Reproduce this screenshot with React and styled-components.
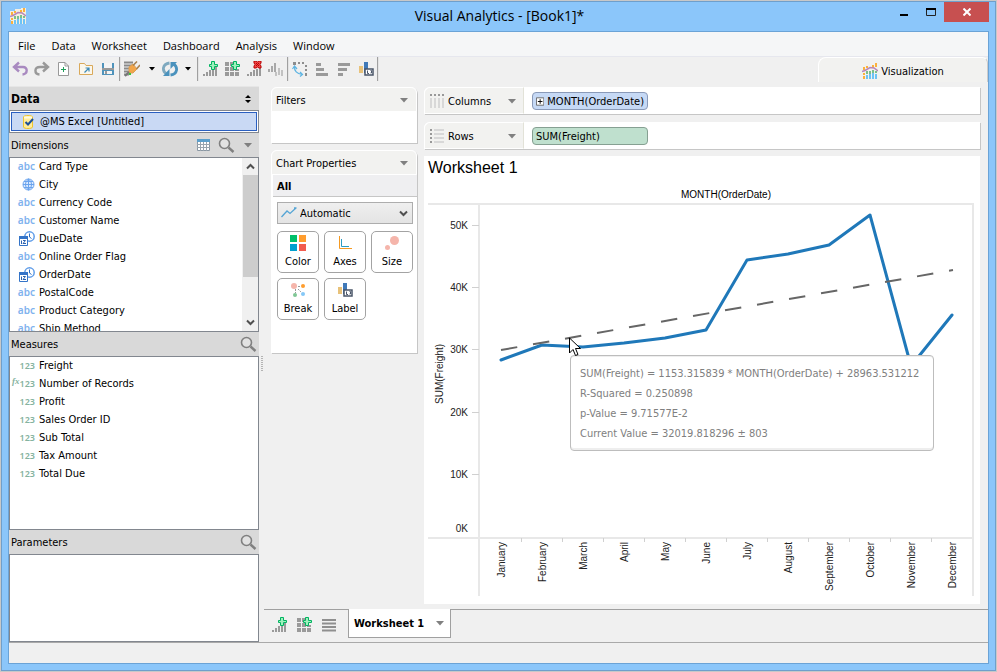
import React from "react";
import styled, { createGlobalStyle } from "styled-components";

const tahoma = `"DejaVu Sans Condensed", "Noto Sans", sans-serif`;
const segoe = `"Open Sans", "Noto Sans", sans-serif`;
const arial = `"Liberation Sans", Arial, sans-serif`;

const GlobalStyle = createGlobalStyle`
*{ box-sizing:border-box; }
body{ margin:0; background:#c8c8c8; color:#000; font-family:${tahoma}; font-size:11px; }
button{ font:inherit; color:inherit; background:none; border:0; padding:0; margin:0; }
h1,h2,h3,ul,p{ margin:0; padding:0; font-weight:normal; }
ul{ list-style:none; }
svg{ display:block; }
`;

const Window = styled.div`
min-height:100vh;
display:flex;
flex-direction:column;
border:1px solid #c8c8c8;
background:#8bc6fa;
box-shadow:inset 0 0 0 1px #6f9fcb;
padding:0 7px 7px;
`;
const TitleBar = styled.header`
display:grid;
grid-template-columns:1fr auto 1fr;
height:30px;
padding-left:2px;
`;
const Title = styled.h1`
font-family:${segoe};
font-size:14px;
line-height:30px;
`;
const AppIcon = styled.div`
align-self:center;
`;
const WindowButtons = styled.div`
display:flex;
justify-content:flex-end;
margin-top:1px;
height:20px;
`;
const WindowButton = styled.button`
width:${(p) => (p.$close ? 45 : 27)}px;
height:20px;
display:flex;
align-items:center;
justify-content:center;
background:${(p) => (p.$close ? "#c75050" : "transparent")};
`;
const Client = styled.div`
flex:1;
display:flex;
flex-direction:column;
border:1px solid #6ba3d6;
background:#f0f0f0;
`;
const MenuBar = styled.nav`
display:flex;
height:25px;
padding-left:1px;
background:#f5f6f7;
border-bottom:1px solid #e6e7ee;
`;
const MenuItem = styled.button`
padding:3px 8px 0;
font-family:${segoe};
font-size:11px;
`;
const ToolRow = styled.div`
display:flex;
justify-content:space-between;
height:29px;
`;
const Tools = styled.div`
display:flex;
height:24px;
`;
const Tool = styled.button`
width:${(p) => p.$width || 22}px;
display:flex;
align-items:center;
justify-content:center;
`;
const Divider = styled.div`
width:2px;
border-left:1px solid #a0a0a0;
background:#e4e4e4;
`;
const VizTab = styled.button`
width:170px;
height:25px;
display:flex;
align-items:center;
justify-content:center;
gap:3px;
background:#f2f2f0;
border:1px solid #fff;
border-right-color:#ccc;
border-bottom:0;
border-radius:8px 6px 0 0;
padding-top:2px;
`;
const Body = styled.div`
flex:1;
display:flex;
min-width:0;
border-bottom:1px solid #a9a9a9;
`;
const Side = styled.aside`
width:250px;
flex:none;
display:flex;
flex-direction:column;
background:#d9d9d9;
border-top:1px solid #e6e6e6;
`;
const SideHeader = styled.div`
display:flex;
align-items:center;
gap:8px;
height:${(p) => (p.$first ? 23 : 24)}px;
padding:0 2px;
`;
const SideTitle = styled.h2`
flex:1;
font-size:${(p) => (p.$bold ? 12 : 11)}px;
font-weight:${(p) => (p.$bold ? "bold" : "normal")};
`;
const IconButton = styled.button`
display:flex;
align-items:center;
justify-content:center;
`;
const Source = styled.div`
height:23px;
padding:1px;
background:#fff;
border:1px solid #82878f;
`;
const SourceButton = styled.button`
width:100%;
height:19px;
display:flex;
align-items:center;
gap:6px;
padding-left:11px;
background:#c9d9f4;
border:1px solid #2a5fc0;
`;
const ListBox = styled.div`
display:flex;
flex:${(p) => (p.$grow ? "1" : "none")};
height:${(p) => p.$height || 174}px;
overflow:hidden;
background:#fff;
border:1px solid #82878f;
`;
const Fields = styled.ul`
flex:1;
min-width:0;
overflow:hidden;
`;
const Field = styled.li`
display:flex;
align-items:center;
height:18px;
padding-bottom:2px;
`;
const FieldIcon = styled.span`
width:25px;
margin-right:4px;
display:flex;
justify-content:flex-end;
align-items:center;
font-family:"Noto Sans", sans-serif;
font-weight:600;
white-space:nowrap;
color:${(p) => (p.$kind === "abc" ? "#7fb2ee" : "#85b3a0")};
font-size:${(p) => (p.$kind === "abc" ? 10 : 9)}px;
`;
const Fx = styled.i`
font-family:"Liberation Serif", serif;
font-size:9px;
line-height:9px;
align-self:flex-start;
`;
const Scroll = styled.div`
width:16px;
display:flex;
flex-direction:column;
align-items:center;
justify-content:space-between;
background:#f0f0f0;
`;
const Thumb = styled.div`
width:15px;
height:102px;
margin-bottom:37px;
background:#cdcdcd;
`;
const ScrollButton = styled.button`
width:16px;
height:17px;
display:flex;
align-items:center;
justify-content:center;
`;
const Splitter = styled.div`
width:5px;
flex:none;
display:flex;
align-items:center;
justify-content:center;
`;
const Grip = styled.div`
width:2px;
height:16px;
background:repeating-linear-gradient(#b4b4b4 0 1px, #f0f0f0 1px 2px);
`;
const Main = styled.main`
flex:1;
min-width:0;
display:flex;
flex-direction:column;
`;
const Work = styled.div`
flex:1;
display:flex;
gap:7px;
padding:1px 8px 5px 7px;
`;
const Shelves = styled.div`
width:146px;
flex:none;
display:flex;
flex-direction:column;
gap:7px;
`;
const Card = styled.section`
height:${(p) => p.$height}px;
background:#fff;
border-radius:6px 6px 0 0;
box-shadow:1px 1px 0 #c6c6c6;
`;
const CardHeader = styled.div`
display:flex;
align-items:center;
justify-content:space-between;
height:25px;
padding:2px 8px 0 4px;
background:#f2f2f0;
border:1px solid #fff;
border-radius:6px 6px 0 0;
`;
const CardTitle = styled.h2`
font-size:11px;
`;
const AllRow = styled.div`
height:22px;
margin-left:2px;
padding-left:4px;
line-height:23px;
font-size:11px;
font-weight:bold;
background:#efeff1;
border-bottom:1px solid #c6c6c6;
`;
const SelectWrap = styled.label`
display:flex;
align-items:center;
justify-content:space-between;
position:relative;
margin:5px 4px 7px 6px;
`;
const MarkSelect = styled.select`
appearance:none;
width:100%;
height:22px;
padding:0 0 0 22px;
border:1px solid #adadad;
border-radius:0;
background:linear-gradient(#efefef, #e4e4e4);
font:inherit;
color:#000;
`;
const SelectIcon = styled.span`
position:absolute;
pointer-events:none;
${(p) => (p.$right ? "right:5px;" : "left:4px;")}
`;
const Marks = styled.div`
display:grid;
grid-template-columns:repeat(3, 42px);
gap:5px;
padding-left:6px;
`;
const Mark = styled.button`
height:42px;
display:flex;
flex-direction:column;
align-items:center;
gap:4px;
padding-top:2px;
background:#fff;
border:1px solid #a3a3a3;
border-radius:5px;
`;
const Sheet = styled.div`
flex:1;
min-width:0;
display:flex;
flex-direction:column;
`;
const Shelf = styled.div`
display:flex;
height:27px;
margin-bottom:${(p) => (p.$last ? 7 : 8)}px;
background:#fff;
border-radius:6px 0 0 0;
box-shadow:1px 1px 0 #c6c6c6;
`;
const ShelfLabel = styled.div`
width:100px;
display:flex;
align-items:center;
gap:4px;
padding:1px 7px 0 5px;
background:#f2f2f0;
border:1px solid #fff;
border-right-color:#e2e2d8;
border-radius:6px 0 0 0;
`;
const ShelfName = styled.span`
flex:1;
`;
const Pill = styled.button`
align-self:center;
width:116px;
height:18px;
margin-left:8px;
display:flex;
align-items:center;
gap:3px;
padding:1px 3px 0;
background:${(p) => (p.$measure ? "#bfe0ce" : "#c6d9f5")};
border:1px solid ${(p) => (p.$measure ? "#86a092" : "#8a9ab8")};
border-radius:4px;
white-space:nowrap;
`;
const Canvas = styled.section`
flex:1;
padding:0 6px 0 4px;
background:#fff;
`;
const SheetTitle = styled.h2`
font-family:${arial};
font-size:16px;
line-height:24px;
`;
const AxisTitle = styled.h3`
padding-left:50px;
text-align:center;
font-family:${arial};
font-size:10px;
line-height:12px;
margin:9px 0 3px;
`;
const Plot = styled.div`
position:relative;
`;
const Chart = styled.svg`
width:100%;
height:auto;
overflow:visible;
font-family:${arial};
font-size:10px;
fill:#222;
`;
const Tooltip = styled.div`
position:absolute;
left:142px;
top:151px;
width:364px;
height:96px;
padding:8px 9px;
background:#fff;
border:1px solid #bdbdbd;
border-radius:4px;
box-shadow:inset 0 1px 0 #eee, inset 0 -2px 0 #eee;
color:#808080;
line-height:20px;
white-space:nowrap;
`;
const Pointer = styled.div`
position:absolute;
left:141px;
top:133px;
`;
const SheetTabs = styled.div`
display:flex;
height:33px;
`;
const TabTools = styled.div`
display:flex;
align-items:center;
gap:9px;
width:84px;
padding:0 0 2px 7px;
border-top:1px solid #a0a0a0;
`;
const SheetTab = styled.button`
display:flex;
align-items:center;
justify-content:space-between;
width:103px;
height:29px;
padding:0 6px 0 5px;
background:#fff;
border:1px solid #a0a0a0;
border-top:0;
font-weight:bold;
`;
const TabFill = styled.div`
flex:1;
border-top:1px solid #a0a0a0;
`;
const StatusBar = styled.footer`
height:20px;
`;

// ---------- icons ----------

const Icon = ({ w = 16, h = 16, children }) => (
  <svg width={w} height={h} viewBox={`0 0 ${w} ${h}`} aria-hidden="true">{children}</svg>
);

const Caret = ({ color = "#808080" }) => (
  <Icon w={8} h={5}><path d="M0 0H8L4 4.5Z" fill={color} /></Icon>
);
const SmallCaret = () => (
  <Icon w={6} h={4}><path d="M0 0H6L3 3.500Z" /></Icon>
);
const Chevron = ({ up }) => (
  <Icon w={9} h={7}><path d={up ? "M1 5.5L4.5 2L8 5.5" : "M1 1.5L4.5 5L8 1.5"} fill="none" stroke="#505050" strokeWidth="2" /></Icon>
);
const Search = () => (
  <Icon w={17} h={17}>
    <circle cx="6.5" cy="6.5" r="5" fill="#e2e2e2" stroke="#808080" strokeWidth="1.6" />
    <path d="M10.5 10.5L15.5 15" stroke="#808080" strokeWidth="2.4" />
  </Icon>
);
const Logo = ({ glow }) => (
  <Icon>
    {glow && <path d="M0 3H5V1H11V0H16V16H1V12H0Z" fill="#f5efe2" />}
    <g shapeRendering="crispEdges">
      <path d="M1 4h2v3H1zM4 3h2v2H4zM10 2h2v3h-2zM13 0h2v4h-2zM1 13h2v3H1zM1 10h2v2H1z" fill="#fbb13c" />
      <path d="M4 8h2v3H4zM7 8h2v3H7zM10 7h2v3h-2zM13 8h2v2h-2z" fill="#7cc08c" />
      <path d="M4 12h2v4H4zM7 11h2v5H7zM10 10h2v6h-2zM13 11h2v5h-2z" fill="#6dc3f5" />
    </g>
    <path d="M0 8.5L3 7.5L8 4.5L12 5L16 8" fill="none" stroke="#b886b8" strokeWidth="1.5" />
  </Icon>
);
const Undo = () => (
  <Icon>
    <path d="M7 1.5L2 6L7 10.5M2 6H11C16 6 16 13 10.5 13.5" fill="none" stroke="#a98ac0" strokeWidth="2.4" />
  </Icon>
);
const Redo = () => (
  <Icon>
    <path d="M9 1.5L14 6L9 10.5M14 6H6C0 6 0 13 5.5 13.5" fill="none" stroke="#999" strokeWidth="2.4" />
  </Icon>
);
const NewFile = () => (
  <Icon>
    <path d="M2.500 1.500H9L12.500 5V14.500H2.500Z" fill="#fff" stroke="#999" />
    <path d="M9 1.500V5H12.500" fill="none" stroke="#999" />
    <path d="M5 8.500H10M7.500 6V11" stroke="#1fa05a" />
  </Icon>
);
const OpenFile = () => (
  <Icon>
    <path d="M1.500 2.500H6.500L8 4.500H14.500V13.500H1.500Z" fill="#fbf7ec" stroke="#d9a95a" />
    <path d="M6.500 11.500L10.500 7.500M7.500 7H11V10.500" fill="none" stroke="#3b8ab8" strokeWidth="1.200" />
  </Icon>
);
const Save = () => (
  <Icon>
    <path d="M2 2H14V14H2Z" fill="#4f93bb" />
    <path d="M4 2H12V7H4Z" fill="#f4f4f4" />
    <path d="M2 7H14V9H2Z" fill="#999" />
    <path d="M4 10H12V13H4Z" fill="#f4f4f4" />
    <path d="M5 10H7V13H5Z" fill="#999" />
  </Icon>
);
const Plug = () => (
  <Icon>
    <path d="M0 1.500H9M0 4.500H9M0 7.500H7M0 10.500H7M0 13.500H5" stroke="#8a8a8a" strokeWidth="2" />
    <path d="M5 6L9 3L13 8L9 12L5 12Z" fill="#f2a549" stroke="#d9a05a" />
    <path d="M9 4.500L13 .500M12.500 8L16 4" stroke="#a98250" strokeWidth="1.600" />
    <path d="M1 15L5 11" stroke="#777" strokeWidth="2" />
    <path d="M5 12H7V14H5Z" fill="#37c837" />
  </Icon>
);
const Refresh = () => (
  <Icon>
    <path d="M7.500 2C0 3 0 10 4.500 13" fill="none" stroke="#7ea9bf" strokeWidth="2.800" />
    <path d="M7.500 8V15H1Z" fill="#4a92bd" />
    <path d="M8.500 14C16 13 16 6 11.500 3" fill="none" stroke="#4a92bd" strokeWidth="2.800" />
    <path d="M8.500 8V1H15Z" fill="#4a92bd" />
  </Icon>
);
const Plus = () => (
  <path d="M9.500 3.500V.500H12.500V3.500H15.500V5.500H12.500V8.500H9.500V5.500H7.500V3.500Z" fill="#9ff0bd" stroke="#00b461" />
);
const bars = "M1 13h2v2H1zM4 11h2v4H4zM7 9h2v6H7zM10 8h2v7h-2zM13 6h2v9h-2z";
const NewSheet = () => (
  <Icon><path d={bars} fill="#9a9a9a" /><Plus /></Icon>
);
const NewBoard = () => (
  <Icon>
    <path d="M1 1h4v4H1zM6 1h4v4H6zM1 6h4v4H1zM6 6h4v4H6zM11 8h4v2h-4zM1 11h4v4H1zM6 11h4v4H6zM11 11h4v4h-4z" fill="#9a9a9a" />
    <Plus />
  </Icon>
);
const ClearSheet = () => (
  <Icon>
    <path d={bars} fill="#9a9a9a" />
    <path d="M8 0H10L11.500 1L13 0H15V2L14 3.500L15 5V7H13L11.500 6L10 7H8V5L9 3.500L8 2Z" fill="#f04848" stroke="#b80000" />
    <path d="M10 2L13 5M13 2L10 5" stroke="#b80000" />
  </Icon>
);
const Duplicate = () => (
  <Icon>
    <path d="M0 8h2v3H0zM3 5h2v6H3zM6 2h2v9H6z" fill="#a8a8a8" />
    <path d="M7 11h2v4H7zM10 7h2v7h-2zM13 9h2v6h-2z" fill="#c2c2c2" />
  </Icon>
);
const Swap = () => (
  <Icon>
    <path d="M1 1h3v3H1zM6 1h2v2H6zM10 1h2v2h-2zM13 4h2v2h-2zM13 8h2v2h-2zM13 12h2v3h-2z" fill="#8d8d8d" />
    <path d="M2.500 5C2 10 5 13 10 13.500M.500 8L2.500 5L5 8M8 11L10.500 13.500L8 15.500" fill="none" stroke="#5db4e2" strokeWidth="1.200" />
  </Icon>
);
const SortAsc = () => (
  <Icon><path d="M2 2h5v3H2zM2 7h8v3H2zM2 12h12v3H2z" fill="#9a9a9a" /></Icon>
);
const SortDesc = () => (
  <Icon><path d="M2 2h12v3H2zM2 7h9v3H2zM2 12h5v3H2z" fill="#9a9a9a" /></Icon>
);
const LabelIcon = () => (
  <Icon>
    <path d="M1 5h4v7H1z" fill="#e8c27a" />
    <path d="M6 1h4v11H6z" fill="#4079b8" />
    <path d="M7 8H15V14H7Z" fill="#fff" stroke="#4a5568" strokeWidth="1.500" />
    <path d="M9.500 9.500V12.500H11M12.500 9.500H13.500V12H12.500" fill="none" stroke="#4a5568" />
  </Icon>
);
const Lines = () => (
  <Icon><path d="M1 3h14M1 6.500h14M1 10h14M1 13.500h14" stroke="#8f8f8f" strokeWidth="2" /></Icon>
);
const TableIcon = () => (
  <Icon w={13} h={12}>
    <path d="M.500 .500H12.500V11.500H.500Z" fill="#fff" stroke="#8a97a3" />
    <path d="M0 0H13V3H0Z" fill="#5c9fcb" />
    <path d="M0 5.500H13M0 8.500H13M3.500 3V12M6.500 3V12M9.500 3V12" stroke="#9aa5ae" />
  </Icon>
);
const SourceIcon = () => (
  <Icon w={11} h={14}>
    <path d="M.500 2C.500 0 9.500 0 9.500 2V12C9.500 14 .500 14 .500 12Z" fill="#ffec9c" stroke="#eec42e" />
    <path d="M1 2.500H9" stroke="#fffbe0" strokeWidth="2" />
    <path d="M2.500 7L5 9.500L10 4" fill="none" stroke="#1c4f96" strokeWidth="2" />
  </Icon>
);
const Globe = () => (
  <Icon w={13} h={13}>
    <circle cx="6.500" cy="6.500" r="5.500" fill="#dcebff" stroke="#6ba4ee" />
    <path d="M1 6.500H12M2 3.500H11M2 9.500H11M6.500 1V12M6.500 1C2.500 4 2.500 9 6.500 12C10.500 9 10.500 4 6.500 1" fill="none" stroke="#6ba4ee" />
  </Icon>
);
const DateIcon = () => (
  <Icon w={16} h={15}>
    <circle cx="10.500" cy="5.500" r="4.700" fill="#fff" stroke="#5f9ce8" strokeWidth="1.500" />
    <path d="M10.500 2.500V6L12.500 7.500" fill="none" stroke="#2f6fc4" />
    <path d="M.500 5.500H8.500V14.500H.500Z" fill="#fff" stroke="#3474c8" />
    <path d="M0 5H9V8H0Z" fill="#3474c8" />
    <path d="M2.500 9.500V13M4 9.500H6.500L4 12.500H7" fill="none" stroke="#2b62b0" />
  </Icon>
);
const LineMark = () => (
  <Icon w={16} h={12}><path d="M.500 10L6 4L9 6.500L15 1M13 1H15.500" fill="none" stroke="#55a5d5" strokeWidth="1.300" /></Icon>
);
const ColorMark = () => (
  <Icon w={18} h={17}>
    <path d="M1 1h7v7H1z" fill="#00c06a" />
    <path d="M10 1h7v7h-7z" fill="#ff9d2e" />
    <path d="M1 10h7v7H1z" fill="#00a0cf" />
    <path d="M10 10h7v7h-7z" fill="#f25c4e" />
  </Icon>
);
const AxesMark = () => (
  <Icon w={18} h={17}>
    <path d="M3.500 2V14.500H16" fill="none" stroke="#f59a23" />
    <path d="M5.500 5V12.500H13" fill="none" stroke="#2c9cc4" />
  </Icon>
);
const SizeMark = () => (
  <Icon w={18} h={17}>
    <circle cx="11.500" cy="6.500" r="4.500" fill="#f5b5ab" />
    <circle cx="4.500" cy="13.500" r="2.500" fill="#f5b5ab" />
  </Icon>
);
const BreakMark = () => (
  <Icon w={18} h={17}>
    <circle cx="5" cy="5" r="3" fill="#f5b5ab" />
    <circle cx="14" cy="5" r="2" fill="#ff9d2e" />
    <circle cx="6" cy="14" r="2" fill="#7fc795" />
    <circle cx="14" cy="13" r="2" fill="#85c8f7" />
    <path d="M9 5.500H12M6.500 8V12M9 8L12 11" fill="none" stroke="#999" strokeDasharray="2 1" />
  </Icon>
);
const LabelMark = () => (
  <Icon w={18} h={17}>
    <path d="M2 6h4v7H2z" fill="#e8c27a" />
    <path d="M7 2h4v11H7z" fill="#4079b8" />
    <path d="M8 9H16V15H8Z" fill="#fff" stroke="#4a5568" strokeWidth="1.500" />
    <path d="M10.500 10.500V13.500H12M13.500 10.500H14.500V13H13.500" fill="none" stroke="#4a5568" />
  </Icon>
);
const ColumnsIcon = () => (
  <Icon w={14} h={14}>
    <path d="M1 0V2M5 0V2M9 0V2M13 0V2" stroke="#999" strokeWidth="2" />
    <path d="M1 4V14M5 4V14M9 4V14M13 4V14" stroke="#d8d8d8" strokeWidth="2" />
  </Icon>
);
const RowsIcon = () => (
  <Icon w={14} h={14}>
    <path d="M0 1H2M0 5H2M0 9H2M0 13H2" stroke="#999" strokeWidth="2" />
    <path d="M4 1H14M4 5H14M4 9H14M4 13H14" stroke="#d8d8d8" strokeWidth="2" />
  </Icon>
);
const Expand = () => (
  <Icon w={9} h={9}>
    <path d="M.500 .500H8.500V8.500H.500Z" fill="#fff" stroke="#666" />
    <path d="M2 4.500H7M4.500 2V7" stroke="#000" />
  </Icon>
);

// ---------- data ----------

const menus = ["File", "Data", "Worksheet", "Dashboard", "Analysis", "Window"];

const tools = [
  ["Undo", Undo], ["Redo", Redo], ["New", NewFile], ["Open", OpenFile], ["Save", Save], "|",
  ["Connect", Plug], ["Connect options", null, 18], ["Refresh", Refresh, 18], ["Refresh options", null, 18], "|",
  ["New worksheet", NewSheet], ["New dashboard", NewBoard], ["Clear", ClearSheet], ["Duplicate", Duplicate], "|",
  ["Swap", Swap], ["Sort ascending", SortAsc], ["Sort descending", SortDesc], ["Labels", LabelIcon], "|",
];

const dimensions = [
  ["abc", "Card Type"], ["geo", "City"], ["abc", "Currency Code"], ["abc", "Customer Name"],
  ["date", "DueDate"], ["abc", "Online Order Flag"], ["date", "OrderDate"], ["abc", "PostalCode"],
  ["abc", "Product Category"], ["abc", "Ship Method"],
];
const measures = [
  ["123", "Freight"], ["fx", "Number of Records"], ["123", "Profit"], ["123", "Sales Order ID"],
  ["123", "Sub Total"], ["123", "Tax Amount"], ["123", "Total Due"],
];
const marks = [
  ["Color", ColorMark], ["Axes", AxesMark], ["Size", SizeMark], ["Break", BreakMark], ["Label", LabelMark],
];
const freight = [
  ["January", 156], ["February", 141], ["March", 143], ["April", 139], ["May", 134], ["June", 126],
  ["July", 56], ["August", 50], ["September", 41], ["October", 11], ["November", 162], ["December", 111],
];
const ticks = [["50K", 21], ["40K", 83], ["30K", 145], ["20K", 208], ["10K", 270]];
const monthX = (i) => 73 + i * 41;

const FieldList = ({ items }) => (
  <Fields>
    {items.map(([kind, name]) => (
      <Field key={name}>
        <FieldIcon $kind={kind}>
          {kind === "abc" && "abc"}
          {kind === "123" && "123"}
          {kind === "fx" && <><Fx>fx</Fx>123</>}
          {kind === "geo" && <Globe />}
          {kind === "date" && <DateIcon />}
        </FieldIcon>
        {name}
      </Field>
    ))}
  </Fields>
);

const FreightChart = () => (
  <Chart viewBox="0 0 546 392" role="img" aria-label="SUM(Freight) by MONTH(OrderDate)">
    <g fill="none" stroke="#e8e8e8" strokeWidth="2" shapeRendering="crispEdges">
      <path d="M0 0H546M51 0V392M545 0V392M0 334H546" />
    </g>
    {ticks.map(([label, y]) => (
      <g key={label}>
        <path d={`M44 ${y + 0.5}H51`} stroke="#d0d0d0" />
        <text x="40" y={y + 4} textAnchor="end">{label}</text>
      </g>
    ))}
    <text x="40" y="328" textAnchor="end">0K</text>
    <text transform="translate(15 170) rotate(-90)" textAnchor="middle">SUM(Freight)</text>
    {freight.map(([month], i) => (
      <g key={month}>
        {i > 0 && <path d={`M${monthX(i) - 20.5} 334V338`} stroke="#d0d0d0" />}
        <text transform={`translate(${monthX(i) + 4} 338) rotate(-90)`} textAnchor="end">{month}</text>
      </g>
    ))}
    <polyline
      points={freight.map(([, y], i) => `${monthX(i)},${y}`).join(" ")}
      fill="none" stroke="#1f78b9" strokeWidth="3" strokeLinecap="round" strokeLinejoin="round"
    />
    <path d="M73 146L525 66" stroke="#666" strokeWidth="2" strokeDasharray="16.500 16" />
  </Chart>
);

class App extends React.Component {
  render() {
    return (<>
      <GlobalStyle />
      <Window>
        <TitleBar>
          <AppIcon><Logo glow /></AppIcon>
          <Title>Visual Analytics - [Book1]*</Title>
          <WindowButtons>
            <WindowButton aria-label="Minimize"><Icon w={8} h={8}><path d="M0 6h8v2H0z" /></Icon></WindowButton>
            <WindowButton aria-label="Maximize"><Icon w={10} h={9}><path d="M.500 1H9.500V7.500H.500Z" fill="none" stroke="#222" /><path d="M0 0h10v2H0z" /></Icon></WindowButton>
            <WindowButton $close aria-label="Close"><Icon w={8} h={8}><path d="M.500 .500L7.500 7.500M7.500 .500L.500 7.500" stroke="#fff" strokeWidth="2" /></Icon></WindowButton>
          </WindowButtons>
        </TitleBar>
        <Client>
          <MenuBar>
            {menus.map((m) => <MenuItem key={m}>{m}</MenuItem>)}
          </MenuBar>
          <ToolRow>
            <Tools>
              {tools.map((t, i) => {
                if (t === "|") return <Divider key={i} />;
                const [label, Glyph, width] = t;
                return (
                  <Tool key={label} $width={width} aria-label={label}>
                    {Glyph ? <Glyph /> : <SmallCaret />}
                  </Tool>
                );
              })}
            </Tools>
            <VizTab><Logo />Visualization</VizTab>
          </ToolRow>
          <Body>
            <Side>
              <SideHeader $first>
                <SideTitle $bold>Data</SideTitle>
                <IconButton aria-label="Sort data sources">
                  <Icon w={16} h={8}><path d="M4 3L7 0L10 3ZM4 5L7 8L10 5Z" /></Icon>
                </IconButton>
              </SideHeader>
              <Source>
                <SourceButton><SourceIcon />@MS Excel [Untitled]</SourceButton>
              </Source>
              <SideHeader>
                <SideTitle>Dimensions</SideTitle>
                <IconButton aria-label="View data"><TableIcon /></IconButton>
                <IconButton aria-label="Search dimensions"><Search /></IconButton>
                <IconButton aria-label="Dimension options"><Icon w={14} h={5}><path d="M1 0H9L5 4.500Z" fill="#808080" /></Icon></IconButton>
              </SideHeader>
              <ListBox $height={175}>
                <FieldList items={dimensions} />
                <Scroll>
                  <ScrollButton aria-label="Scroll up"><Chevron up /></ScrollButton>
                  <Thumb />
                  <ScrollButton aria-label="Scroll down"><Chevron /></ScrollButton>
                </Scroll>
              </ListBox>
              <SideHeader>
                <SideTitle>Measures</SideTitle>
                <IconButton aria-label="Search measures"><Search /></IconButton>
              </SideHeader>
              <ListBox><FieldList items={measures} /></ListBox>
              <SideHeader>
                <SideTitle>Parameters</SideTitle>
                <IconButton aria-label="Search parameters"><Search /></IconButton>
              </SideHeader>
              <ListBox $grow $height={88} />
            </Side>
            <Splitter><Grip /></Splitter>
            <Main>
              <Work>
                <Shelves>
                  <Card $height={56}>
                    <CardHeader>
                      <CardTitle>Filters</CardTitle>
                      <IconButton aria-label="Filter options"><Caret /></IconButton>
                    </CardHeader>
                  </Card>
                  <Card $height={203}>
                    <CardHeader>
                      <CardTitle>Chart Properties</CardTitle>
                      <IconButton aria-label="Chart options"><Caret /></IconButton>
                    </CardHeader>
                    <AllRow>All</AllRow>
                    <SelectWrap>
                      <SelectIcon><LineMark /></SelectIcon>
                      <MarkSelect aria-label="Mark type"><option>Automatic</option></MarkSelect>
                      <SelectIcon $right><Chevron /></SelectIcon>
                    </SelectWrap>
                    <Marks>
                      {marks.map(([name, Glyph]) => <Mark key={name}><Glyph />{name}</Mark>)}
                    </Marks>
                  </Card>
                </Shelves>
                <Sheet>
                  <Shelf>
                    <ShelfLabel>
                      <ColumnsIcon />
                      <ShelfName>Columns</ShelfName>
                      <IconButton aria-label="Column options"><Caret /></IconButton>
                    </ShelfLabel>
                    <Pill><Expand />MONTH(OrderDate)</Pill>
                  </Shelf>
                  <Shelf $last>
                    <ShelfLabel>
                      <RowsIcon />
                      <ShelfName>Rows</ShelfName>
                      <IconButton aria-label="Row options"><Caret /></IconButton>
                    </ShelfLabel>
                    <Pill $measure>SUM(Freight)</Pill>
                  </Shelf>
                  <Canvas>
                    <SheetTitle>Worksheet 1</SheetTitle>
                    <AxisTitle>MONTH(OrderDate)</AxisTitle>
                    <Plot>
                      <FreightChart />
                      <Tooltip role="tooltip">
                        <p>SUM(Freight) = 1153.315839 * MONTH(OrderDate) + 28963.531212</p>
                        <p>R-Squared = 0.250898</p>
                        <p>p-Value = 9.71577E-2</p>
                        <p>Current Value = 32019.818296 ± 803</p>
                      </Tooltip>
                      <Pointer>
                        <Icon w={12} h={20}><path d="M.500 1V16L4 12.500L6.500 18.500L9 17.500L6.500 11.500H11.500Z" fill="#fff" stroke="#000" /></Icon>
                      </Pointer>
                    </Plot>
                  </Canvas>
                </Sheet>
              </Work>
              <SheetTabs>
                <TabTools>
                  <IconButton aria-label="New worksheet"><NewSheet /></IconButton>
                  <IconButton aria-label="New dashboard"><NewBoard /></IconButton>
                  <IconButton aria-label="Sheet list"><Lines /></IconButton>
                </TabTools>
                <SheetTab>Worksheet 1<Caret /></SheetTab>
                <TabFill />
              </SheetTabs>
            </Main>
          </Body>
          <StatusBar />
        </Client>
      </Window>
    </>)
  }
}

export default App;
